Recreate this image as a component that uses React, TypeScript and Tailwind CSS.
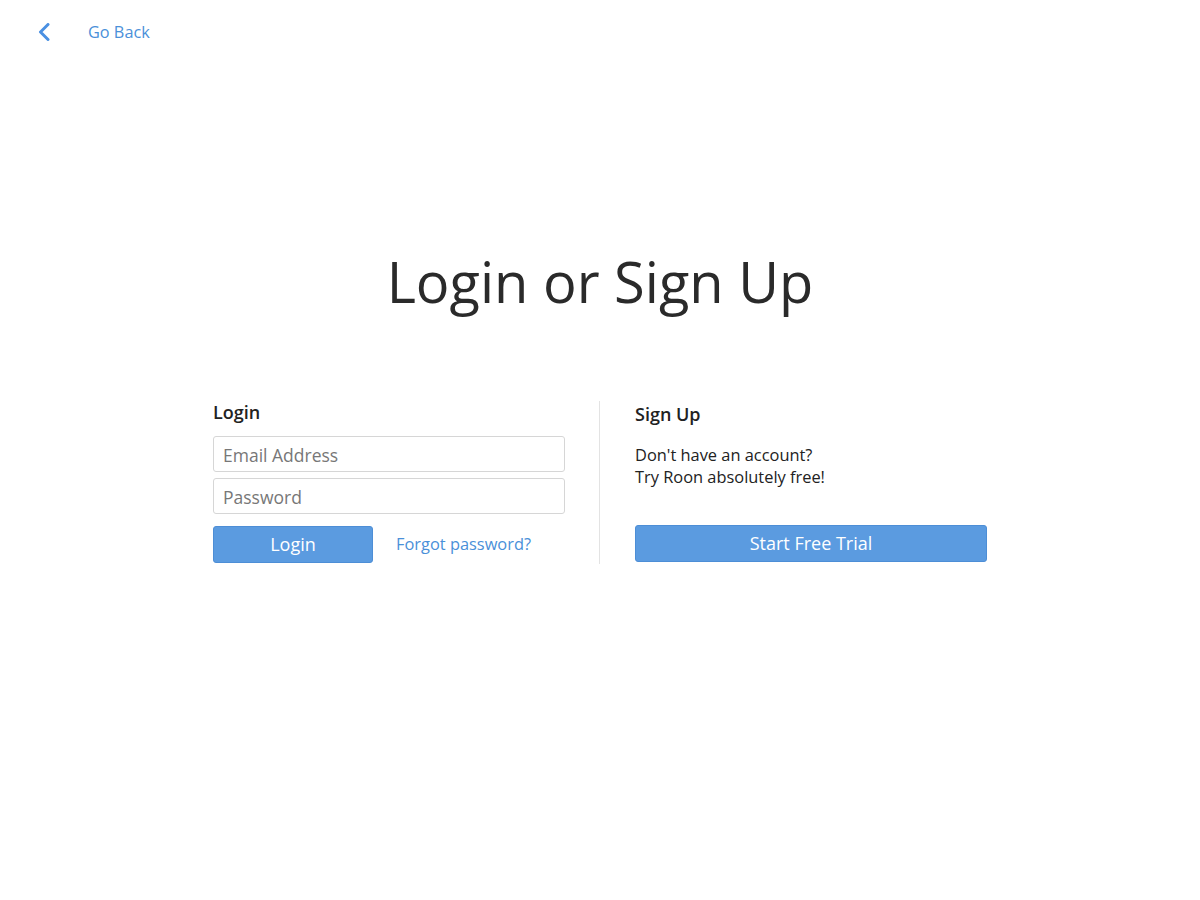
import React from "react";

export default function App() {
  const font = { fontFamily: '"Open Sans", "Noto Sans", sans-serif' };
  return (
    <div className="w-[1200px] h-[900px] bg-white relative" style={font}>
      <div className="flex items-center h-[64px] pl-[37px]">
        <svg width="14" height="18" viewBox="0 0 14 18" className="mr-[37px]">
          <path d="M11 1.5 L3.5 9 L11 16.5" fill="none" stroke="#4a90e2" strokeWidth="3" strokeLinecap="round" strokeLinejoin="round" />
        </svg>
        <span className="text-[16.3px] text-[#4a90d9]">Go Back</span>
      </div>
      <h1 className="text-center text-[56px] leading-[56px] text-[#2a2a2a] mt-[189px]">Login or Sign Up</h1>
      <div className="flex justify-center mt-[92px]">
        <div className="w-[352px] mr-[34px]">
          <div className="text-[18px] font-semibold text-[#222] leading-[22px]">Login</div>
          <input
            placeholder="Email Address"
            className="mt-[13px] block w-[352px] h-[36px] border border-[#d6d6d6] rounded-[3px] px-[9px] pt-[2px] text-[17.5px] text-[#333] placeholder:text-[#777] outline-none"
          />
          <input
            placeholder="Password"
            className="mt-[6px] block w-[352px] h-[36px] border border-[#d6d6d6] rounded-[3px] px-[9px] pt-[2px] text-[17.5px] text-[#333] placeholder:text-[#777] outline-none"
          />
          <div className="flex items-center mt-[12px]">
            <button className="w-[160px] h-[37px] bg-[#5b9be0] border border-[#4d8ed6] rounded-[3px] text-white text-[18px]">Login</button>
            <span className="ml-[23px] text-[16.4px] text-[#4a90d9]">Forgot password?</span>
          </div>
        </div>
        <div className="w-px bg-[#e3e3e3] h-[163px]" />
        <div className="w-[352px] ml-[35px]">
          <div className="text-[18px] font-semibold text-[#222] leading-[24px] mt-[1px]">Sign Up</div>
          <div className="mt-[18px] text-[16.4px] text-[#222] leading-[22px]">
            <div>Don't have an account?</div>
            <div>Try Roon absolutely free!</div>
          </div>
          <button className="mt-[37px] w-[352px] h-[37px] bg-[#5b9be0] border border-[#4d8ed6] rounded-[3px] text-white text-[18px]">Start Free Trial</button>
        </div>
      </div>
    </div>
  );
}
